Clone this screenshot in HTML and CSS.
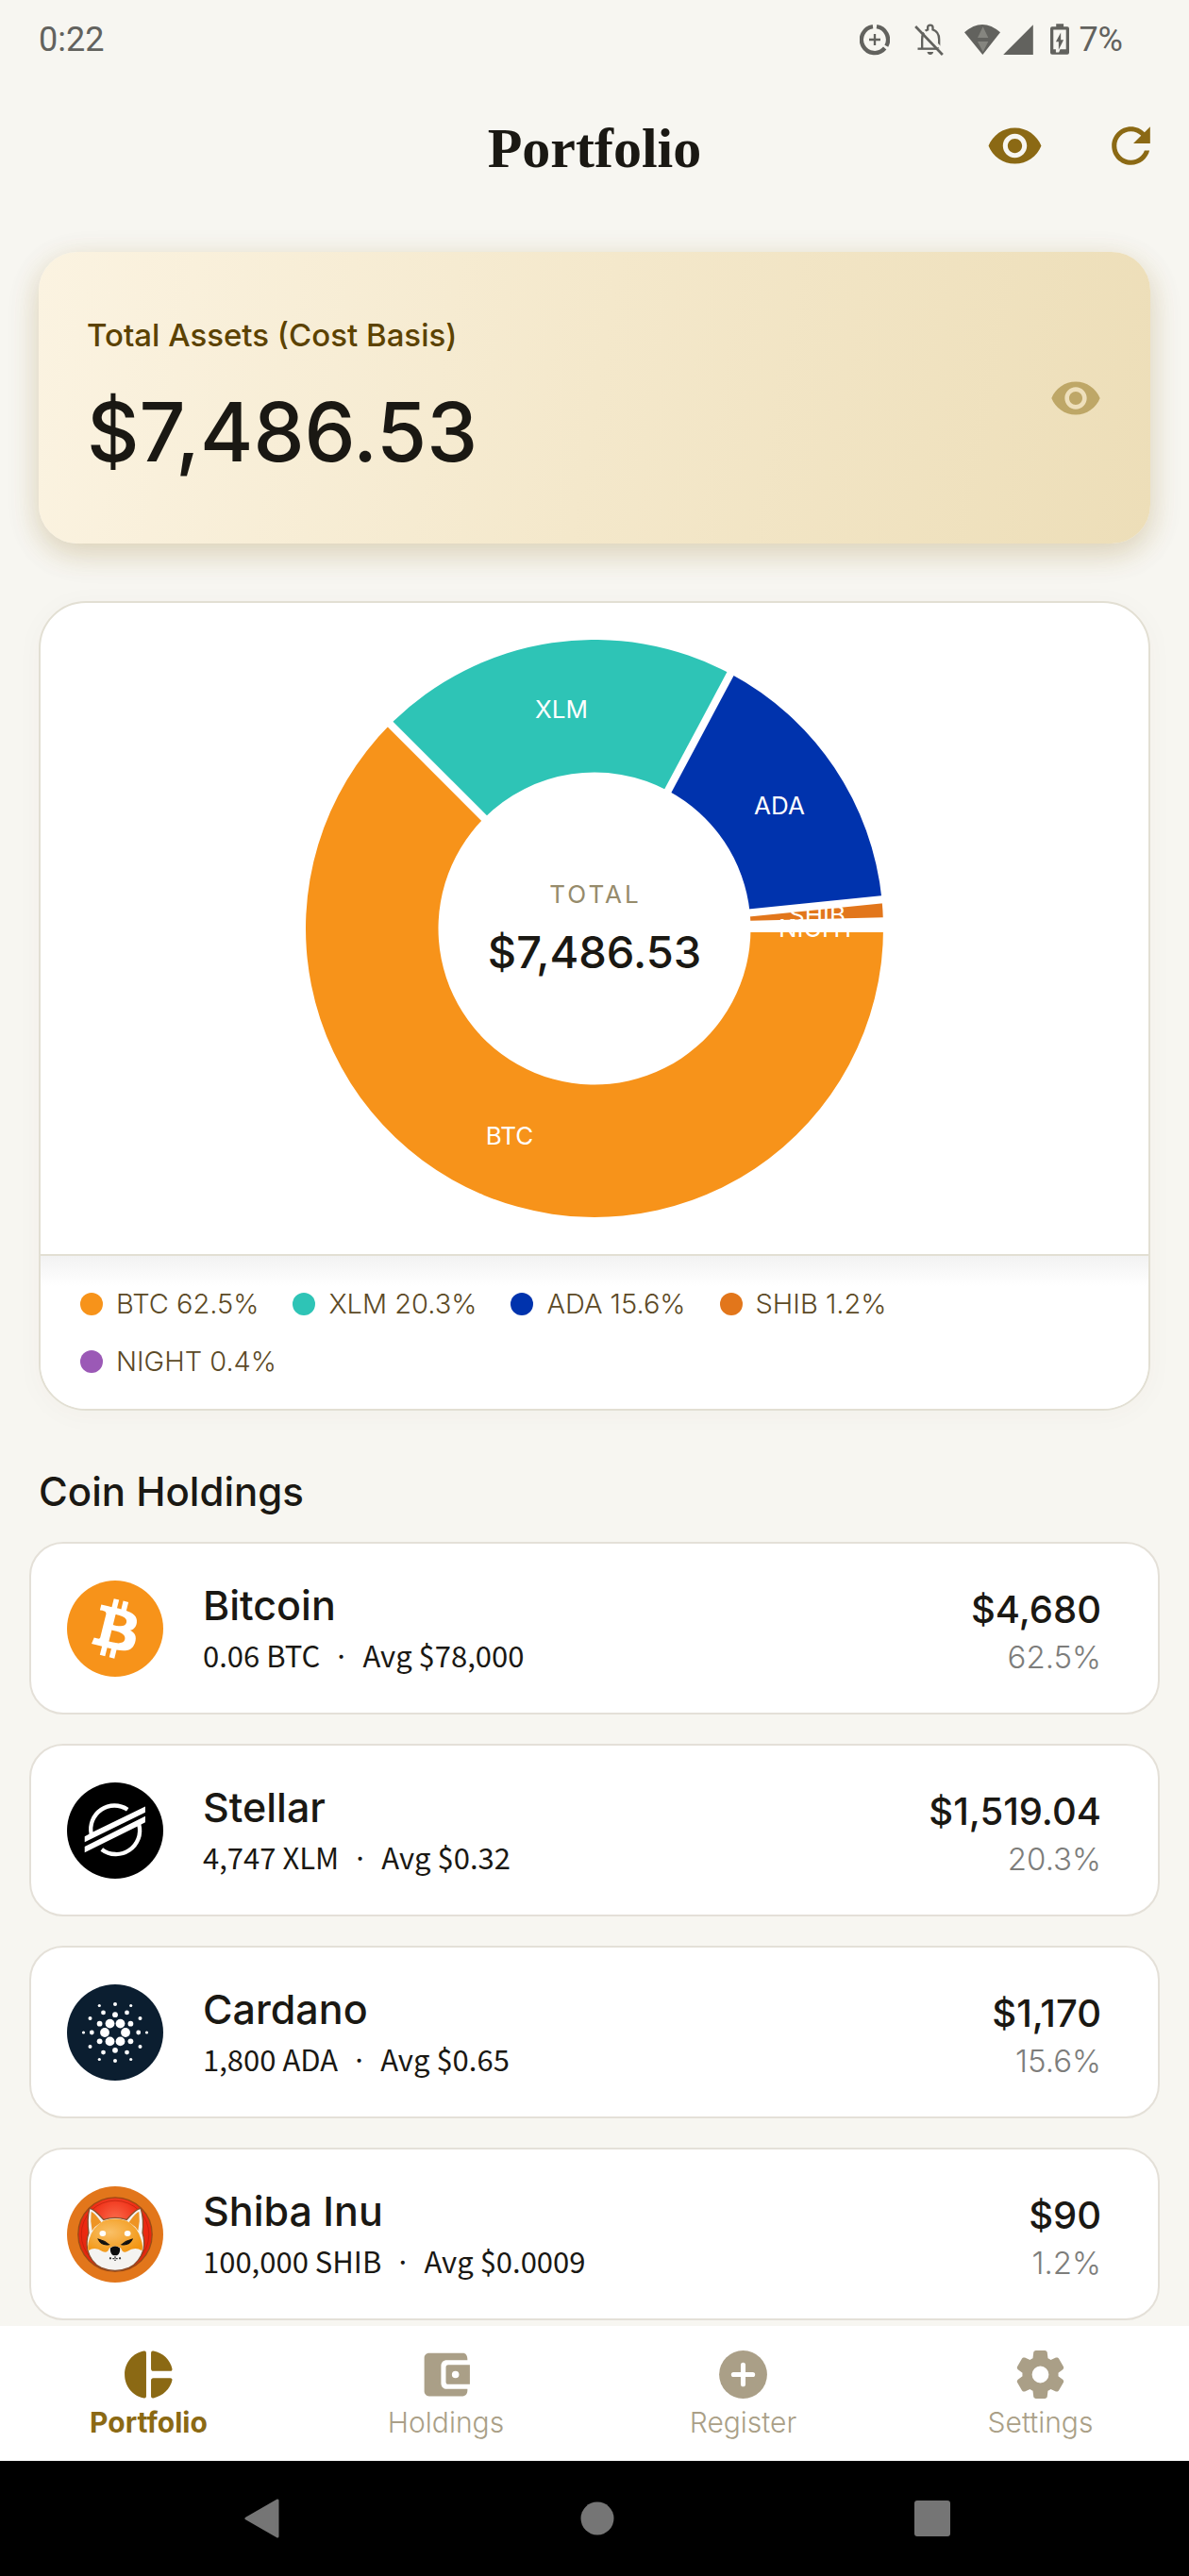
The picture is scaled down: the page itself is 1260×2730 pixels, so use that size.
FILE: index.html
```html
<!DOCTYPE html>
<html lang="en">
<head>
<meta charset="utf-8">
<meta name="viewport" content="width=device-width, initial-scale=1">
<title>Portfolio</title>
<link rel="stylesheet" href="styles.css">
</head>
<body>
<svg class="defs" aria-hidden="true">
  <symbol id="eye" viewBox="0 0 24 24"><path fill="currentColor" d="M12 4.500C7 4.500 2.730 7.610 1 12c1.730 4.390 6 7.500 11 7.500s9.270-3.110 11-7.500c-1.730-4.390-6-7.500-11-7.500zM12 17c-2.760 0-5-2.240-5-5s2.240-5 5-5 5 2.240 5 5-2.240 5-5 5zm0-8c-1.660 0-3 1.340-3 3s1.340 3 3 3 3-1.340 3-3-1.340-3-3-3z"/></symbol>
</svg>

<div class="status">
  <span class="status-time">0:22</span>
  <div class="status-icons">
    <svg class="ic-saver" viewBox="93 42 96 102"><g fill="none" stroke="currentColor" stroke-width="13"><path d="M147 51.500A42 42 0 0 1 178 113"/><path d="M173 120A42 42 0 1 1 135 51.500"/></g><path d="M141 75v36M123 93h36" stroke="currentColor" stroke-width="7"/></svg>
    <svg class="ic-bell" viewBox="268 42 92 102"><path d="M292 121V92q0-25 18-31V54q0-7 8-7t8 7v7q20 7 20 31v29" fill="none" stroke="currentColor" stroke-width="7"/><path d="M278 122h64" stroke="currentColor" stroke-width="7"/><path d="M308 132h20q-2 9-10 9t-10-9z" fill="currentColor"/><path d="M278 46l86 86" stroke="#f7f6f1" stroke-width="8"/><path d="M271 51l86 90" stroke="currentColor" stroke-width="8"/></svg>
    <svg class="ic-wifi" viewBox="426 42 114 102"><path d="M426 70q57-50 114 0l-56 71z" fill="currentColor"/><path d="M485 52l17 35h-34zM468 99h34l-17 33z" fill="#85857f"/></svg>
    <svg class="ic-signal" viewBox="550 42 95 102"><path d="M645 46v95h-95z" fill="currentColor"/></svg>
    <svg class="ic-battery" viewBox="698 42 61 102"><path fill="currentColor" fill-rule="evenodd" d="M717 42h24v9h12q6 0 6 6v78q0 6-6 6h-49q-6 0-6-6V57q0-6 6-6h13zM708 61v63h8v10h10l4-10h19V61z"/><path d="M732 70v24h9l-16 32v-26h-9z" fill="currentColor"/></svg>
    <span class="status-level">7%</span>
  </div>
</div>

<header class="topbar">
  <h1 class="topbar-title">Portfolio</h1>
  <div class="topbar-actions">
    <button class="icon-btn" type="button" aria-label="Show amounts"><svg class="icon"><use href="#eye"/></svg></button>
    <button class="icon-btn" type="button" aria-label="Refresh"><svg class="icon" viewBox="0 0 24 24"><path fill="currentColor" d="M17.650 6.350C16.200 4.900 14.210 4 12 4c-4.420 0-7.990 3.580-7.990 8s3.570 8 7.990 8c3.730 0 6.840-2.550 7.730-6h-2.080c-.820 2.330-3.040 4-5.650 4-3.310 0-6-2.690-6-6s2.690-6 6-6c1.660 0 3.140.690 4.220 1.780L13 11h7V4l-2.350 2.350z"/></svg></button>
  </div>
</header>

<main class="content">
  <section class="total">
    <div>
      <p class="total-label">Total Assets (Cost Basis)</p>
      <p class="total-amount">$7,486.53</p>
    </div>
    <svg class="total-eye"><use href="#eye"/></svg>
  </section>

  <section class="chart">
    <svg class="donut" viewBox="-306 -306 612 612" role="img" aria-label="Allocation by coin">
      <path fill="#f7931a" d="M306 0A306 306 0 1 1-216.400-216.400L-117-117A165.500 165.500 0 1 0 165.500 0z"/>
      <path fill="#2ec4b6" d="M-216.400-216.400A306 306 0 0 1 144-270L77.900-146A165.500 165.500 0 0 0-117-117z"/>
      <path fill="#0033ad" d="M144-270A306 306 0 0 1 304.500-30.700L164.700-16.600A165.500 165.500 0 0 0 77.900-146z"/>
      <path fill="#e2761b" d="M304.500-30.700A306 306 0 0 1 305.900-7.700L165.400-4.200A165.500 165.500 0 0 0 164.700-16.600z"/>
      <g stroke="#fff" stroke-width="8"><path d="M150 0H312"/><path d="M-108-108L-222-222"/><path d="M72-135L147-275.500"/><path d="M156-15.700L311-31.400"/><path d="M156-3.900L312-7.800"/></g>
      <g class="donut-label">
        <text x="-90" y="229">BTC</text>
        <text x="-35" y="-223">XLM</text>
        <text x="196" y="-121">ADA</text>
        <text x="236" y="-5">SHIB</text>
        <text x="236" y="9">NIGHT</text>
      </g>
      <text class="donut-caption" x="1" y="-27">TOTAL</text>
      <text class="donut-total" x="0" y="42">$7,486.53</text>
    </svg>
    <ul class="legend">
      <li class="btc">BTC 62.5%</li>
      <li class="xlm">XLM 20.3%</li>
      <li class="ada">ADA 15.6%</li>
      <li class="shib">SHIB 1.2%</li>
      <li class="night">NIGHT 0.4%</li>
    </ul>
  </section>

  <h2 class="section-title">Coin Holdings</h2>
  <ul class="coins">
    <li class="coin">
      <svg class="coin-logo" viewBox="0 0 32 32"><circle cx="16" cy="16" r="16" fill="#f7931a"/><path fill="#fff" d="M23.189 14.020c.314-2.096-1.283-3.223-3.465-3.975l.708-2.840-1.728-.430-.690 2.765c-.454-.114-.920-.220-1.385-.326l.695-2.783L15.596 6l-.708 2.839c-.376-.086-.746-.170-1.104-.260l.002-.009-2.384-.595-.460 1.846s1.283.294 1.256.312c.700.175.826.638.805 1.006l-.806 3.235c.048.012.110.030.180.057l-.183-.045-1.130 4.532c-.086.212-.303.531-.793.410.018.025-1.256-.313-1.256-.313l-.858 1.978 2.250.561c.418.105.828.215 1.231.318l-.715 2.872 1.727.430.708-2.840c.472.127.930.245 1.378.357l-.706 2.828 1.728.430.715-2.866c2.948.558 5.164.333 6.097-2.333.752-2.146-.037-3.385-1.588-4.192 1.130-.260 1.980-1.003 2.207-2.538zm-3.950 5.538c-.533 2.147-4.148.986-5.320.695l.950-3.805c1.172.293 4.929.872 4.370 3.110zm.535-5.569c-.487 1.953-3.495.960-4.470.717l.860-3.450c.975.243 4.118.696 3.610 2.733z"/></svg>
      <div class="coin-info"><h3 class="coin-name">Bitcoin</h3><p class="coin-sub">0.06 BTC &nbsp;·&nbsp; Avg $78,000</p></div>
      <div class="coin-value"><p class="coin-amount">$4,680</p><p class="coin-share">62.5%</p></div>
    </li>
    <li class="coin">
      <svg class="coin-logo" viewBox="0 0 305 305"><circle cx="152.500" cy="152.500" r="152.500"/><g fill="none" stroke="#fff" stroke-width="13"><path d="M192 86A75 75 0 0 0 77 164"/><path d="M228 133A75 75 0 0 1 110 212"/></g><path fill="#fff" d="M56 171l26-14L248 76v19L56 189zM56 203L248 107v19l-20 11L56 222z"/></svg>
      <div class="coin-info"><h3 class="coin-name">Stellar</h3><p class="coin-sub">4,747 XLM &nbsp;·&nbsp; Avg $0.32</p></div>
      <div class="coin-value"><p class="coin-amount">$1,519.04</p><p class="coin-share">20.3%</p></div>
    </li>
    <li class="coin">
      <svg class="coin-logo" viewBox="-51 -51 102 102"><circle r="51" fill="#0b1e30"/><g fill="#fff"><circle cx="-11" r="4.900"/><circle cx="11" r="4.900"/><circle cx="-5.500" cy="-9.400" r="4.900"/><circle cx="5.500" cy="-9.400" r="4.900"/><circle cx="-5.500" cy="9.400" r="4.900"/><circle cx="5.500" cy="9.400" r="4.900"/><circle cy="-18.800" r="2.900"/><circle cy="18.800" r="2.900"/><circle cx="-16.400" cy="-9.300" r="2.900"/><circle cx="16.400" cy="-9.300" r="2.900"/><circle cx="-16.400" cy="9.300" r="2.900"/><circle cx="16.400" cy="9.300" r="2.900"/><circle cx="-24.700" r="2.400"/><circle cx="24.700" r="2.400"/><circle cx="-12.500" cy="-21.100" r="2.400"/><circle cx="12.500" cy="-21.100" r="2.400"/><circle cx="-12.500" cy="21.100" r="2.400"/><circle cx="12.500" cy="21.100" r="2.400"/><circle cx="-26.500" cy="-15" r="2"/><circle cx="26.500" cy="-15" r="2"/><circle cx="-26.500" cy="15" r="2"/><circle cx="26.500" cy="15" r="2"/><circle cy="-30" r="2"/><circle cy="30" r="2"/><circle cx="-16.700" cy="-28.500" r="1.600"/><circle cx="16.700" cy="-28.500" r="1.600"/><circle cx="-16.700" cy="28.500" r="1.600"/><circle cx="16.700" cy="28.500" r="1.600"/><circle cx="-33.500" r="1.600"/><circle cx="33.500" r="1.600"/></g></svg>
      <div class="coin-info"><h3 class="coin-name">Cardano</h3><p class="coin-sub">1,800 ADA &nbsp;·&nbsp; Avg $0.65</p></div>
      <div class="coin-value"><p class="coin-amount">$1,170</p><p class="coin-share">15.6%</p></div>
    </li>
    <li class="coin">
      <svg class="coin-logo" viewBox="36 54 302 302">
        <defs><radialGradient id="red" cx=".5" cy=".3" r=".6"><stop offset="0" stop-color="#fb6a4a"/><stop offset=".6" stop-color="#ee2a12"/><stop offset="1" stop-color="#e5280f"/></radialGradient><radialGradient id="fur" cx=".4" cy=".4" r=".7"><stop offset="0" stop-color="#f9c067"/><stop offset="1" stop-color="#f2940f"/></radialGradient></defs>
        <circle cx="187" cy="205" r="151" fill="#e2761b"/>
        <circle cx="187" cy="205" r="116" fill="url(#red)" stroke="#9c4a14" stroke-width="4"/>
        <circle cx="187" cy="205" r="106" fill="none" stroke="#b8200c" stroke-width="2"/>
        <path d="M106 125q8-6 45 34 36-12 72 0 36-40 45-34 10 34 5 75 8 26 3 52-12 42-46 58-43 18-86 0-34-16-44-58-5-26 4-52-6-41 2-75z" fill="#f4f3f1" stroke="#8a4e2a" stroke-width="4"/>
        <path d="M112 134q8 0 32 33-22 12-29 27-7-30-3-60zM262 134q-8 0-32 33 22 12 29 27 7-30 3-60z" fill="#ee9424"/>
        <path d="M150 163q37-14 74 0 34 20 44 56 8 24 3 37-22-14-46 2-14 8-20-10-18-12-36 0-6 18-22 10-24-16-44-2-4-13 3-37 10-36 44-56z" fill="url(#fur)"/>
        <ellipse cx="148" cy="202" rx="10" ry="9" fill="#fff"/><ellipse cx="226" cy="202" rx="10" ry="9" fill="#fff"/>
        <path d="M134 220q18 4 34 17-24 4-34-17zM241 220q-18 4-34 17 24 4 34-17z" fill="#111" stroke="#111" stroke-width="3"/>
        <path d="M172 248q15-12 30 0 2 16-9 23h-12q-11-7-9-23z" fill="#0d0d0d"/>
        <path d="M169 281h36M172 276v10M187 274v14M202 276v10" stroke="#333" stroke-width="4" stroke-dasharray="6 4"/>
      </svg>
      <div class="coin-info"><h3 class="coin-name">Shiba Inu</h3><p class="coin-sub">100,000 SHIB &nbsp;·&nbsp; Avg $0.0009</p></div>
      <div class="coin-value"><p class="coin-amount">$90</p><p class="coin-share">1.2%</p></div>
    </li>
  </ul>
</main>

<nav class="tabs">
  <a class="tab tab-active" href="#portfolio" aria-current="page"><svg class="icon" viewBox="0 0 24 24"><path fill="currentColor" d="M11 3v18q0 1-1 .800C5.500 21 2 17 2 12s3.500-9 8-9.800q1-.200 1 .800zM13 3v6.500q0 1 1 1h7q1 0 .800-1C21 6 18 2.900 14 2.200q-1-.200-1 .800zM13 14.500V21q0 1 1 .800C18 21 21 18 21.800 14.500q.200-1-.800-1h-7q-1 0-1 1z"/></svg>Portfolio</a>
  <a class="tab" href="#holdings"><svg class="icon" viewBox="0 0 24 24"><path fill="currentColor" d="M21 18.500c0 1.400-.600 2.500-2 2.500H5c-1.110 0-2-.900-2-2V5c0-1.100.890-2 2-2h14c1.400 0 2 1 2 3h-8.500C10.800 6 10 7 10 8.500v7c0 1.500.800 2.500 2.500 2.500H21z"/><path fill="currentColor" fill-rule="evenodd" d="M13 8h9v8h-9q-1 0-1-1V9q0-1 1-1zm3 2.500a1.500 1.500 0 1 0 0 3 1.500 1.500 0 1 0 0-3z"/></svg>Holdings</a>
  <a class="tab" href="#register"><svg class="icon" viewBox="0 0 24 24"><circle cx="12" cy="12" r="10" fill="currentColor"/><path d="M12 8v8M8 12h8" stroke="#fff" stroke-width="2" stroke-linecap="round"/></svg>Register</a>
  <a class="tab" href="#settings"><svg class="icon" viewBox="0 0 24 24"><path fill="currentColor" d="M19.500 12c0-.230-.010-.450-.030-.680l1.860-1.410c.400-.300.510-.860.260-1.300l-1.870-3.230c-.250-.440-.790-.620-1.250-.420l-2.150.910c-.370-.260-.760-.490-1.170-.680l-.290-2.310C14.800 2.380 14.370 2 13.870 2h-3.730c-.510 0-.940.380-1 .880l-.290 2.310c-.410.190-.800.420-1.170.680l-2.150-.910c-.460-.200-1-.020-1.250.420L2.410 8.620c-.250.440-.140.990.260 1.300l1.860 1.410c-.020.220-.030.440-.030.670s.010.450.030.680l-1.860 1.410c-.400.300-.510.860-.260 1.300l1.870 3.230c.250.440.790.620 1.250.420l2.150-.910c.370.260.760.490 1.170.680l.290 2.310c.060.500.490.880.990.880h3.730c.500 0 .930-.380.990-.880l.290-2.310c.410-.190.800-.420 1.170-.680l2.150.910c.460.200 1 .020 1.250-.420l1.870-3.230c.250-.440.140-.990-.260-1.300l-1.860-1.410c.030-.230.040-.450.040-.680zM12 15.500a3.500 3.500 0 1 1 0-7 3.500 3.500 0 0 1 0 7z"/></svg>Settings</a>
</nav>

<div class="sysnav">
  <button class="sys-btn" type="button" aria-label="Back"><svg class="sys-icon" viewBox="0 0 42 42"><path d="M37 2v38L4 21z" fill="currentColor" stroke="currentColor" stroke-width="3" stroke-linejoin="round"/></svg></button>
  <button class="sys-btn" type="button" aria-label="Home"><svg class="sys-icon" viewBox="0 0 42 42"><circle cx="21" cy="21" r="17.500" fill="currentColor"/></svg></button>
  <button class="sys-btn" type="button" aria-label="Recent apps"><svg class="sys-icon" viewBox="0 0 42 42"><rect x="2" y="2" width="38" height="38" rx="3" fill="currentColor"/></svg></button>
</div>
</body>
</html>
```
FILE: styles.css
```css
* { box-sizing: border-box; }
body, h1, h2, h3, p, ul { margin: 0; padding: 0; }
ul { list-style: none; }
button { border: 0; background: none; padding: 0; font: inherit; }

body {
  min-height: 100vh;
  display: flex;
  flex-direction: column;
  background: #f7f6f1;
  color: #1a1813;
  font-family: Inter, "Open Sans", sans-serif;
}
.defs { display: none; }

.status {
  display: flex;
  align-items: center;
  justify-content: space-between;
  height: 84px;
  padding: 0 70px 0 41px;
  color: #62625e;
  font: 36px/44px Roboto, sans-serif;
}
.status-icons { display: flex; align-items: center; }
.status-icons svg { height: 34px; }
.ic-saver { width: 32px; margin-right: 26px; }
.ic-bell { width: 31px; margin-right: 22px; }
.ic-wifi { width: 38px; margin-right: 3px; }
.ic-signal { width: 32px; margin-right: 18px; }
.ic-battery { width: 20px; margin-right: 10px; }

.topbar {
  display: grid;
  grid-template-columns: 1fr auto 1fr;
  align-items: center;
  height: 140px;
}
.topbar-title {
  grid-column: 2;
  padding-top: 6px;
  font: bold 60px/72px "Liberation Serif", serif;
}
.topbar-actions { display: flex; justify-content: flex-end; color: #8b6914; }
.icon-btn {
  display: flex;
  align-items: center;
  justify-content: center;
  width: 123px;
  height: 100px;
  color: inherit;
}
.icon { width: 61px; height: 61px; }

.content { flex: 1; padding: 43px 31px 5px; }

.total {
  display: flex;
  align-items: center;
  justify-content: space-between;
  margin: 0 10px;
  padding: 66px 51px;
  border-radius: 41px;
  background: linear-gradient(100deg, #fbf3e1, #f4e8cb 50%, #eddeb8);
  box-shadow: 0 10px 30px rgba(139, 105, 20, 0.2), 0 10px 40px rgba(139, 105, 20, 0.08);
}
.total-label { color: #5c4200; font-size: 33px; line-height: 44px; font-weight: 500; }
.total-amount { margin-top: 29px; font-size: 86px; line-height: 104px; font-weight: 500; }
.total-eye { width: 56px; height: 56px; color: #bea767; }

.chart {
  margin: 61px 10px 0;
  border: 2px solid #e2dfd3;
  border-radius: 50px;
  background: #fff;
  box-shadow: 0 4px 30px rgba(80, 70, 30, 0.03);
}
.donut { display: block; width: 100%; max-width: 612px; margin: 39px auto; }
.donut text { text-anchor: middle; }
.donut-label { fill: #fff; font-size: 26px; }
.donut-caption { fill: #968b6b; font-size: 26px; letter-spacing: 3px; }
.donut-total { fill: #1a1813; font-size: 47px; font-weight: 500; }

.legend {
  display: flex;
  flex-wrap: wrap;
  gap: 25px 36px;
  padding: 33px 42px 32px;
  border-top: 2px solid #e2dfd3;
  border-radius: 0 0 48px 48px;
  background: linear-gradient(#f2f2f2, #fff 32px);
  color: #5c4a26;
  font-size: 29px;
  line-height: 36px;
  font-weight: 300;
}
.legend li { display: flex; align-items: center; gap: 14px; }
.legend li::before { content: ""; width: 24px; height: 24px; border-radius: 50%; }
.btc::before { background: #f7931a; }
.xlm::before { background: #2ec4b6; }
.ada::before { background: #0033ad; }
.shib::before { background: #e2761b; }
.night::before { background: #9b59b6; }

.section-title { margin: 61px 10px 28px; font-size: 42px; line-height: 50px; font-weight: 500; }

.coins { display: flex; flex-direction: column; gap: 31px; }
.coin {
  display: flex;
  align-items: center;
  min-height: 183px;
  padding: 0 60px 0 38px;
  border: 2px solid #e4e0d8;
  border-radius: 36px;
  background: #fff;
}
.coin-logo { width: 102px; height: 102px; margin-right: 42px; }
.coin-info { flex: 1; }
.coin-name { font-size: 43px; line-height: 50px; font-weight: 500; }
.coin-sub { margin-top: 6px; font: 31px/44px "Noto Sans CJK JP", sans-serif; }
.coin-value { padding-top: 8px; text-align: right; }
.coin-amount { font-size: 40px; line-height: 48px; font-weight: 500; }
.coin-share { margin-top: 4px; color: #7d7d7b; font-size: 33px; line-height: 44px; font-weight: 300; }

.tabs { display: grid; grid-template-columns: repeat(4, 1fr); height: 143px; background: #fff; }
.tab {
  display: flex;
  flex-direction: column;
  align-items: center;
  gap: 2px;
  padding-top: 21px;
  color: #aa9f87;
  font-size: 30px;
  line-height: 36px;
  font-weight: 300;
  text-decoration: none;
}
.tab-active { color: #8b6914; font-weight: 700; }

.sysnav {
  display: grid;
  grid-template-columns: repeat(3, 1fr);
  height: 122px;
  padding: 0 94px 0 100px;
  background: #000;
}
.sys-btn { display: flex; align-items: center; justify-content: center; color: #757575; }
.sys-icon { width: 42px; height: 42px; }
```
